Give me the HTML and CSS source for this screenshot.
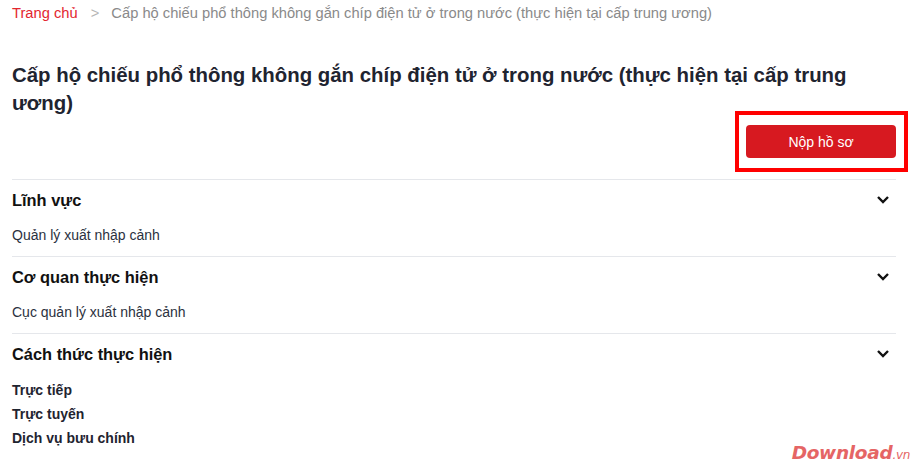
FILE: index.html
```html
<!DOCTYPE html>
<html lang="vi">
<head>
    <meta charset="UTF-8">
    <meta name="viewport" content="width=device-width, initial-scale=1.0">
    <title>Cấp hộ chiếu phổ thông</title>
    <link rel="stylesheet" href="styles.css">
</head>
<body>
    <div class="page">
        <div class="breadcrumb">
            <a href="#" class="crumb-home">Trang chủ</a>
            <span class="crumb-sep">&gt;</span>
            <span class="crumb-current">Cấp hộ chiếu phổ thông không gắn chíp điện tử ở trong nước (thực hiện tại cấp trung ương)</span>
        </div>

        <h1 class="title">Cấp hộ chiếu phổ thông không gắn chíp điện tử ở trong nước (thực hiện tại cấp trung ương)</h1>

        <div class="actions">
            <div class="highlight">
                <button type="button" class="submit-btn">Nộp hồ sơ</button>
            </div>
        </div>

        <div class="section">
            <div class="section-head">
                <h2>Lĩnh vực</h2>
                <svg class="chevron" viewBox="0 0 14 10" width="14" height="10"><path d="M2 2l5 5 5-5" fill="none" stroke="#111" stroke-width="2.4"/></svg>
            </div>
            <p class="section-text">Quản lý xuất nhập cảnh</p>
        </div>

        <div class="section">
            <div class="section-head">
                <h2>Cơ quan thực hiện</h2>
                <svg class="chevron" viewBox="0 0 14 10" width="14" height="10"><path d="M2 2l5 5 5-5" fill="none" stroke="#111" stroke-width="2.4"/></svg>
            </div>
            <p class="section-text">Cục quản lý xuất nhập cảnh</p>
        </div>

        <div class="section">
            <div class="section-head">
                <h2>Cách thức thực hiện</h2>
                <svg class="chevron" viewBox="0 0 14 10" width="14" height="10"><path d="M2 2l5 5 5-5" fill="none" stroke="#111" stroke-width="2.4"/></svg>
            </div>
            <ul class="method-list">
                <li>Trực tiếp</li>
                <li>Trực tuyến</li>
                <li>Dịch vụ bưu chính</li>
            </ul>
        </div>
    </div>
    <div class="watermark">Download<span>.vn</span></div>
</body>
</html>
```

FILE: styles.css
```css
body {
    margin: 0;
    background-color: #fff;
    font-family: "Liberation Sans", Arial, sans-serif;
    color: #222;
    overflow: hidden;
    height: 467px;
    position: relative;
}
.page {
    padding: 0 20px 0 12px;
}
.breadcrumb {
    font-size: 14.7px;
    line-height: 16px;
    padding-top: 5px;
    color: #8a8a8a;
}
.crumb-home {
    color: #e3262f;
    text-decoration: none;
}
.crumb-sep {
    color: #b5b5b5;
    margin: 0 8px 0 9px;
}
.title {
    margin: 40px 0 0;
    font-size: 20.4px;
    line-height: 28px;
    font-weight: bold;
    color: #1f2430;
}
.actions {
    display: flex;
    justify-content: flex-end;
    margin-top: 8px;
}
.highlight {
    position: relative;
}
.highlight::after {
    content: "";
    position: absolute;
    left: -11px;
    top: -14px;
    right: -12px;
    bottom: -14px;
    border: 4px solid #f00;
}
.submit-btn {
    display: block;
    width: 150px;
    height: 33px;
    border: none;
    border-radius: 4px;
    background-color: #d71920;
    color: #fff;
    font-family: "Liberation Sans", Arial, sans-serif;
    font-size: 14px;
    cursor: pointer;
}
.section {
    border-top: 1px solid #e5e7eb;
    padding: 10px 0 11px;
}
.actions + .section {
    margin-top: 21px;
}
.section-head {
    display: flex;
    justify-content: space-between;
    align-items: center;
    padding-right: 6px;
}
.section-head h2 {
    margin: 0;
    font-size: 16.4px;
    line-height: 20px;
    font-weight: bold;
    color: #111;
}
.section-text {
    margin: 15px 0 0;
    font-size: 14px;
    line-height: 20px;
    color: #2b3140;
}
.method-list {
    list-style: none;
    margin: 14px 0 0;
    padding: 0;
}
.method-list li {
    font-size: 14px;
    line-height: 24px;
    font-weight: bold;
    color: #1f2430;
}
.watermark {
    position: absolute;
    right: 6px;
    bottom: 4px;
    font-family: "DejaVu Sans", sans-serif;
    font-weight: bold;
    font-style: italic;
    font-size: 18.5px;
    color: #e56565;
    letter-spacing: -0.3px;
}
.watermark span {
    font-size: 12px;
    font-weight: normal;
}
```
